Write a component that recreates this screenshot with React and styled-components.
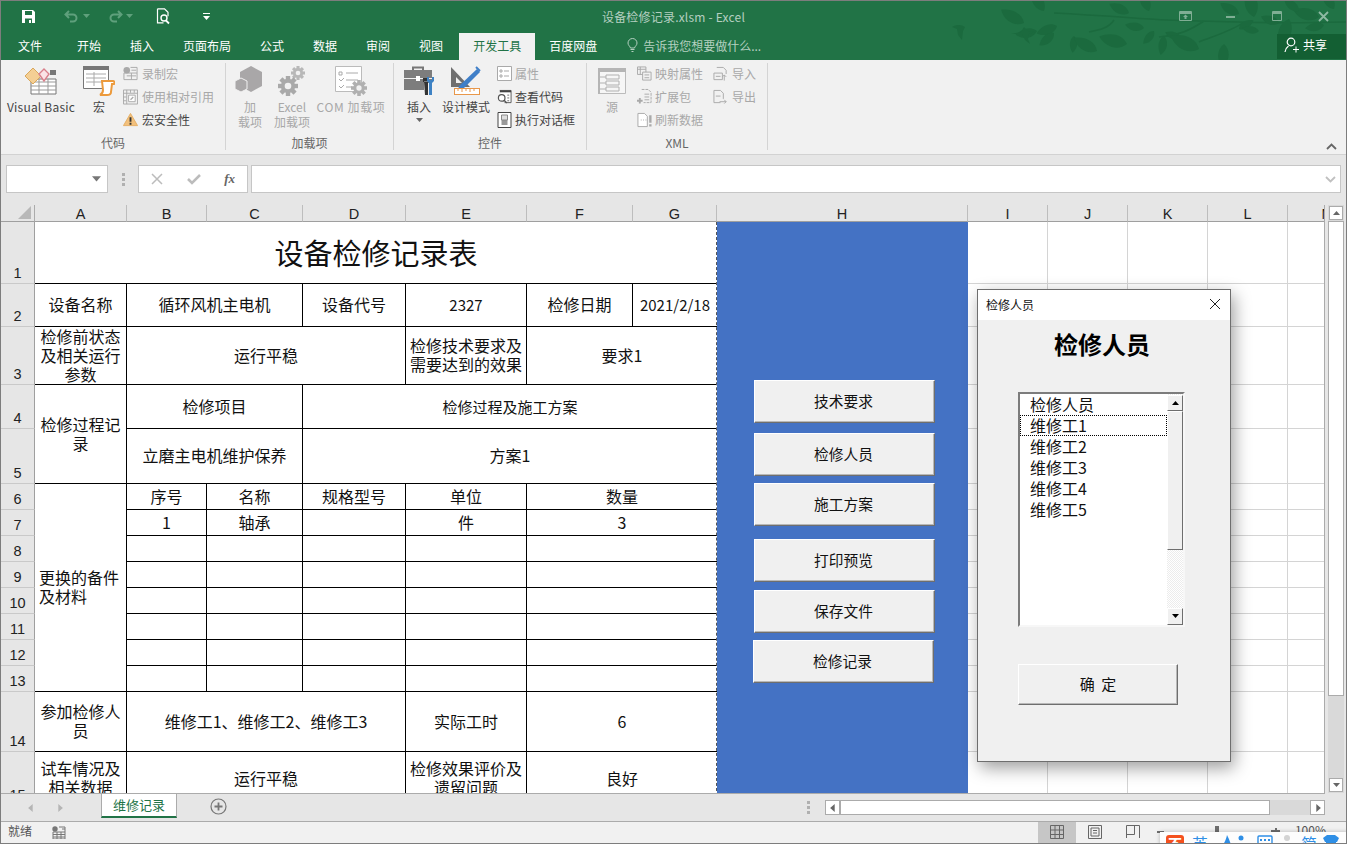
import React from "react";
import styled, { createGlobalStyle, css } from "styled-components";

const Global = createGlobalStyle`
  html, body { margin: 0; padding: 0; background: #fff; }
  body { font-family: "Noto Sans CJK SC", "Liberation Sans", sans-serif; }
  * { box-sizing: border-box; }
`;

const UI = `"Noto Sans CJK SC", "Liberation Sans", sans-serif`;

const Window = styled.div`
  position: relative; width: 1347px; height: 844px; overflow: hidden;
  border: 1px solid #7d7d7d; display: flex; flex-direction: column;
  background: #e6e6e6; font-family: ${UI}; font-size: 12px; color: #444;
`;
const Header = styled.header`
  position: relative; background: #217346; height: 59px; flex: none; overflow: hidden;
`;
const Foliage = styled.svg`
  position: absolute; right: 0; top: 0; pointer-events: none;
`;
const TitleBar = styled.div`
  position: relative; height: 32px; display: grid; grid-template-columns: 1fr auto 1fr; align-items: center; padding-bottom: 2px;
`;
const Quick = styled.div`display: flex; align-items: center; padding-left: 20px; height: 100%;`;
const QuickSlot = styled.span`display: inline-flex; width: ${p => p.$w}px; justify-content: flex-start; align-items: center;`;
const TitleText = styled.div`color: #b4cfc0; font-size: 12px; letter-spacing: .2px;`;
const WinButtons = styled.div`display: flex; justify-content: flex-end; align-items: center; height: 100%;`;
const WinSlot = styled.span`display: inline-flex; justify-content: center; width: 46px;`;
const Tabs = styled.nav`position: relative; height: 27px; display: flex; padding-left: 3px; align-items: stretch;`;
const Tab = styled.div`
  padding: 0 14px 2px; margin-right: ${p => p.$mr ?? 1}px; margin-left: ${p => p.$ml || 0}px; display: flex; align-items: center; font-size: 12px;
  color: ${p => p.$on ? "#217346" : "#fff"}; background: ${p => p.$on ? "#f1f1f1" : "transparent"};
`;
const TellMe = styled.div`display: flex; align-items: center; gap: 5px; color: #b4d0c0; margin-left: 15px; padding-bottom: 2px; font-size: 12px;`;
const Share = styled.div`
  position: absolute; right: 0; top: 1px; width: 69px; height: 25px; background: #135f33; color: #fff;
  display: flex; align-items: center; gap: 3px; padding-left: 7px; font-size: 12px; padding-bottom: 4px;
`;

const Ribbon = styled.section`
  position: relative; height: 95px; flex: none; background: #f1f1f1; border-bottom: 1px solid #d2d2d2; display: flex; padding-top: 3px;
`;
const Group = styled.div`
  width: ${p => p.$w}px; height: 87px; flex: none; border-right: 1px solid #d4d4d4; display: flex; flex-direction: column;
`;
const GroupBody = styled.div`flex: 1; display: flex; align-items: flex-start; min-height: 0;`;
const GroupLabel = styled.div`height: 14px; line-height: 14px; text-align: center; color: #666; font-size: 12px; flex: none;`;
const Large = styled.div`
  width: ${p => p.$w}px; flex: none; display: flex; flex-direction: column; align-items: center; text-align: center; white-space: nowrap;
  color: ${p => p.$off ? "#a8a8a8" : "#444"}; line-height: 15px; font-size: 12px;
`;
const LargeIcon = styled.div`height: 36px; display: flex; align-items: center; justify-content: center;`;
const Spaced = styled.span`letter-spacing: ${p => p.$ls}px;`;
const DropMark = styled.span`display: flex; margin-top: 3px;`;
const SmallCol = styled.div`
  margin-left: ${p => p.$ml || 0}px; margin-top: -1px; width: ${p => p.$w ? p.$w + "px" : "auto"}; display: flex; flex-direction: column;
`;
const Small = styled.div`
  height: 23px; display: flex; align-items: center; gap: ${p => p.$gap || 3}px; white-space: nowrap; font-size: 12px;
  color: ${p => p.$off ? "#a8a8a8" : "#444"};
  & > svg { flex: none; width: 15px; }
`;
const Collapse = styled.svg`position: absolute; right: 9px; bottom: 4px;`;

const FormulaBar = styled.div`
  height: 50px; flex: none; background: #e6e6e6; padding: 10px 5px 12px 5px; display: flex; align-items: stretch;
`;
const NameBox = styled.div`
  width: 102px; background: #fff; border: 1px solid #c6c6c6; display: flex; align-items: center; justify-content: flex-end; padding-right: 6px;
`;
const Grip = styled.div`width: 30px; display: flex; align-items: center; justify-content: center;`;
const FxBox = styled.div`
  width: 110px; background: #fff; border: 1px solid #c6c6c6; display: flex; align-items: center; justify-content: space-between; padding: 0 12px 0 12px;
`;
const FxText = styled.span`font-family: "Liberation Serif", serif; font-style: italic; font-size: 13px; font-weight: 700; color: #666;`;
const FxInput = styled.div`
  flex: 1; margin-left: 3px; background: #fff; border: 1px solid #c6c6c6; display: flex; align-items: center; justify-content: flex-end; padding-right: 4px;
`;

const SheetArea = styled.div`height: 589px; flex: none; display: flex; background: #e6e6e6;`;
const Grid = styled.div`
  width: 1324px; flex: none; overflow: hidden; display: grid; background: #fff; border-right: 1px solid #ababab; border-bottom: 1px solid #ababab;
  grid-template-columns: 34px 92px 80px 96px 103px 121px 106px 84px 251px 80px 80px 80px 80px 80px;
  grid-template-rows: 17px 62px 43px 58px 44px 55px repeat(8, 26px) 60px 54px;
`;
const Corner = styled.div`
  grid-column: 1; grid-row: 1; background: #e6e6e6; border-right: 1px solid #ababab; border-bottom: 1px solid #9f9f9f;
  display: flex; align-items: flex-end; justify-content: flex-end; padding: 0 3px 2px 0;
`;
const ColHead = styled.div`
  grid-column: ${p => p.$c}; grid-row: 1; background: #e6e6e6; color: #222; border-bottom: 1px solid #9f9f9f; border-right: 1px solid #bdbdbd;
  font: 14.5px/18px "Liberation Sans", sans-serif; text-align: center;
`;
const RowHead = styled.div`
  grid-column: 1; grid-row: ${p => p.$r + 1}; background: #e6e6e6; color: #222; border-right: 1px solid #9f9f9f; border-bottom: 1px solid #c9c9c9;
  font: 14.5px/17px "Liberation Sans", sans-serif; display: flex; align-items: flex-end; justify-content: center; padding-bottom: 1px; overflow: hidden;
`;
const Empty = styled.div`
  grid-column: ${p => p.$c}; grid-row: ${p => p.$r + 1}; border-right: 1px solid #d4d4d4; border-bottom: 1px solid #d4d4d4;
`;
const Cell = styled.div`
  grid-column: ${p => p.$c} / span ${p => p.$cs || 1}; grid-row: ${p => p.$r + 1} / span ${p => p.$rs || 1};
  border-bottom: 1px solid #000; border-right: ${p => p.$open ? "0" : "1px solid #000"};
  background: #fff; color: #111; padding: 0 4px 1px; display: flex; align-items: center; min-width: 0; overflow: hidden;
  justify-content: center; font-size: ${p => p.$size || 16}px; line-height: 19px;
  text-align: ${p => p.$left ? "left" : "center"};
  ${p => p.$left && css`justify-content: flex-start;`}
`;
const BlueCol = styled.div`
  grid-column: 9; grid-row: 2 / span 15; margin-left: -1px; background: #4472c4; background-clip: padding-box; border-left: 1px dashed #555;
  display: flex; flex-direction: column; align-items: flex-start; padding: 158px 0 0 37px;
`;
const FormButton = styled.div`
  width: 181px; height: 43px; flex: none; margin-top: ${p => p.$mt || 0}px; margin-left: ${p => p.$ml || 0}px;
  background: #f0f0f0; border: 1px solid; border-color: #fff #6e6e6e #6e6e6e #fff; box-shadow: inset -1px -1px 0 #b8b8b8;
  display: flex; align-items: center; justify-content: center; font-size: 14.7px; color: #111; padding: 0 2px 2px 0;
`;

const VScroll = styled.div`
  width: 16px; margin-left: 3px; flex: none; background: #d9d9d9; display: flex; flex-direction: column; align-items: stretch;
  height: 588px;
`;
const ScrollBtn = styled.div`
  flex: none; width: ${p => p.$w || 15}px; height: ${p => p.$h || 15}px; margin: ${p => p.$m || "0"}; background: #fff; border: 1px solid #ababab;
  display: flex; align-items: center; justify-content: center;
`;
const VThumb = styled.div`height: 475px; flex: none; background: #fff; border: 1px solid #ababab; margin-top: 1px;`;
const VTrack = styled.div`flex: 1;`;

const SheetBar = styled.div`height: 27px; flex: none; background: #e6e6e6; display: flex; align-items: flex-start;`;
const NavArea = styled.div`width: 100px; height: 100%; display: flex; align-items: center; gap: 21px; padding: 0 0 0 26px; flex: none;`;
const SheetTab = styled.div`
  width: 76px; height: 24px; flex: none; background: #fff; border-left: 1px solid #ababab; border-right: 1px solid #ababab; border-bottom: 2px solid #217346;
  color: #217346; text-align: center; line-height: 22px; font-size: 13px;
`;
const AddSheet = styled.div`margin: 4px 0 0 33px; display: flex;`;
const BarSpacer = styled.div`flex: 1;`;
const Dots = styled.div`height: 100%; width: 14px; margin-right: 10px; display: flex; align-items: center; justify-content: center; padding-bottom: 1px;`;
const HScroll = styled.div`
  width: 500px; height: 15px; margin: 6px 21px 0 0; flex: none; background: #d9d9d9; display: flex;
`;
const HThumb = styled.div`width: 430px; height: 15px; background: #fff; border: 1px solid #ababab;`;

const StatusBar = styled.footer`
  flex: 1; background: #f1f1f1; border-top: 1px solid #ababab; display: flex; align-items: flex-start; color: #555; font-size: 12px; position: relative; min-height: 0;
`;
const Ready = styled.div`padding: 1px 0 0 7px; width: 51px; line-height: 16px;`;
const MacroIcon = styled.div`padding-top: 3px;`;
const Views = styled.div`margin-left: auto; display: flex; height: 100%; margin-right: 194px;`;
const ViewBtn = styled.div`
  width: 38px; display: flex; justify-content: center; padding-top: 3px; background: ${p => p.$on ? "#c6c6c6" : "transparent"};
`;
const ZoomText = styled.div`position: absolute; right: 20px; top: -1px; font-size: 12px; color: #555;`;
const ZoomMark = styled.div`
  position: absolute; left: ${p => p.$x}px; top: ${p => p.$t}px; width: ${p => p.$w}px; height: ${p => p.$h}px; background: #6e6e6e;
`;

const Ime = styled.div`
  position: absolute; left: 1159px; top: 831px; width: 188px; height: 14px; background: #fdfdfd; box-shadow: 0 0 4px rgba(0,0,0,.25);
  display: flex; align-items: flex-start; overflow: hidden; padding: 3px 0 0 6px; color: #2f8fe6;
`;
const ImeLogo = styled.div`
  width: 18px; height: 18px; border-radius: 3px; background: #f4511e; color: #fff; text-align: center; font-size: 14px; line-height: 17px; font-weight: 700; flex: none;
`;
const ImeText = styled.span`font-size: 16px; line-height: 16px; margin-left: ${p => p.$ml}px; flex: none;`;
const ImeIcon = styled.span`margin-left: ${p => p.$ml}px; display: inline-flex; flex: none;`;

const Dialog = styled.div`
  position: absolute; left: 976px; top: 288px; width: 254px; height: 473px; background: #f0f0f0; border: 1px solid #6e6e6e;
  box-shadow: 3px 6px 16px rgba(0,0,0,.38); display: flex; flex-direction: column;
`;
const DialogTitle = styled.div`
  height: 30px; flex: none; background: #fff; display: flex; align-items: center; justify-content: space-between; padding: 0 9px 2px 8px; color: #111; font-size: 12px;
`;
const DialogBody = styled.div`flex: 1; padding: 10px 0 0 40px; display: flex; flex-direction: column; align-items: flex-start;`;
const DialogHeading = styled.div`
  width: 167px; height: 30px; text-align: center; font-size: 24px; font-weight: 700; line-height: 28px; color: #000; white-space: nowrap; padding-left: 1px;
`;
const ListBox = styled.div`
  margin-top: 32px; width: 167px; height: 235px; background: #fff; display: flex; border: 2px solid; border-color: #7c7c7c #f7f7f7 #f7f7f7 #7c7c7c;
`;
const ListItems = styled.div`flex: 1; padding-top: 0; min-width: 0;`;
const ListItem = styled.div`
  height: 21px; line-height: 20px; padding-left: 10px; font-size: 16px; color: #111;
  ${p => p.$focus && css`outline: 1px dotted #000; outline-offset: -1px;`}
`;
const ListScroll = styled.div`
  width: 16px; flex: none; display: flex; flex-direction: column;
  background: repeating-conic-gradient(#ececec 0 25%, #fff 0 50%) 0 0 / 2px 2px;
`;
const Bevel = styled.div`
  flex: none; height: ${p => p.$h}px; background: #f0f0f0; border: 1px solid; border-color: #fff #6e6e6e #6e6e6e #fff;
  display: flex; align-items: center; justify-content: center; margin-top: ${p => p.$mt || 0}px;
`;
const ListTrack = styled.div`flex: 1;`;
const OkButton = styled.div`
  margin-top: 37px; width: 160px; height: 41px; background: #f0f0f0; border: 1px solid; border-color: #fff #6e6e6e #6e6e6e #fff;
  box-shadow: inset -1px -1px 0 #b8b8b8; display: flex; align-items: center; justify-content: center; font-size: 15px; color: #111; word-spacing: 3px; padding-bottom: 3px;
`;

/* ---------- icons ---------- */
const G = "#a9a9a9";
const Tri = ({ dir = "down", c = "#666", s = 7 }) => {
  const d = { down: "M0 1h7L3.5 5z", up: "M0 5h7L3.5 1z", left: "M5 0v7L1 3.5z", right: "M2 0v7l4-3.5z" }[dir];
  return <svg width={s} height={s} viewBox="0 0 7 7"><path d={d} fill={c} /></svg>;
};
const SaveIcon = () => (
  <svg width="15" height="15" viewBox="0 0 15 15"><path d="M1 1h11l2 2v11H1z" fill="#fff" /><path d="M4 2h7v4H4zM4 9.5h7V14H4z" fill="#217346" /><path d="M8 11h2v3H8z" fill="#fff" /></svg>
);
const UndoIcon = ({ flip }) => (
  <svg width="15" height="13" viewBox="0 0 15 13" style={flip ? { transform: "scaleX(-1)" } : undefined}><path d="M5 1 1.5 4.5 5 8M2 4.5h7a3.5 3.5 0 0 1 0 7H6" fill="none" stroke="#5fa07c" strokeWidth="2" /></svg>
);
const PreviewIcon = () => (
  <svg width="15" height="17" viewBox="0 0 15 17"><path d="M1.5.8h7l3.5 3.5v4M1.5.8v14h6" fill="none" stroke="#fff" strokeWidth="1.2" /><circle cx="8" cy="10" r="3" fill="none" stroke="#fff" strokeWidth="1.4" /><path d="m10 12.5 3 3" stroke="#fff" strokeWidth="1.8" /></svg>
);
const CustomizeIcon = () => (
  <svg width="9" height="9" viewBox="0 0 9 9"><path d="M1 1h7v1H1z" fill="#fff" /><path d="M1 4h7L4.5 8z" fill="#fff" /></svg>
);
const BranchArt = () => {
  const leaves = [
    [75,22,-150,1.1],[95,10,-120,1],[108,25,160,.9],[88,30,170,.9],[105,32,140,.8],[125,35,95,.7],
    [180,12,-155,.9],[200,10,-110,.9],[195,27,-170,.8],[205,30,130,.7],[290,13,-150,.9],[305,16,-100,1.2],
    [178,43,-165,1.2],[148,50,-150,1.1],[215,35,100,.8],[232,37,-160,.7],[250,48,-155,1.3],[275,43,95,1],[290,28,-30,.7],
    [340,18,110,1.2],[330,22,-160,.8],[310,30,-170,.7],[370,16,-165,1.1],[385,8,-120,.9],[375,24,170,.8],[350,10,-140,.8]
  ];
  const L = "#1b6a3e";
  return (
    <Foliage width="397" height="59" viewBox="0 0 397 59">
      <path d="M105 12c40 2 65 4 95 6s60 2 90 3 60 1 107 0M165 19c-5 8-15 10-25 12M255 20c-15 10-25 14-45 16M295 21c-10 8-30 14-45 20" fill="none" stroke={L} strokeWidth="1.6" />
      {leaves.map(([x, y, r, s], i) => (
        <path key={i} d="M0 0C5-7 16-8 24 0 16 6 6 7 0 0z" fill={L} transform={`translate(${x} ${y}) rotate(${r}) scale(${s})`} />
      ))}
      <path d="M3 26c5-3 10-2 13 0l-2 4-1 9-4-5-1-6zM62 33l10-2 3-5 4 4 7 1-6 2-1 5 2 5-5-4-3-6z" fill={L} />
    </Foliage>
  );
};
const RibbonDisplayIcon = () => (
  <svg width="13" height="10" viewBox="0 0 13 10"><path d="M.5.5h12v9H.5z" fill="none" stroke="#7fae94" /><path d="M1 1h11v2H1zM6.5 3.5 4 6h1.5v2h2V6H9z" fill="#7fae94" /></svg>
);
const MinIcon = () => <svg width="10" height="10" viewBox="0 0 10 10"><path d="M0 5h9v2H0z" fill="#7fae94" /></svg>;
const MaxIcon = () => <svg width="11" height="11" viewBox="0 0 11 11"><path d="M.5.5h9v9h-9z" fill="none" stroke="#7fae94" /><path d="M1 1h8v2H1z" fill="#7fae94" /></svg>;
const CloseIcon = () => <svg width="11" height="11" viewBox="0 0 11 11"><path d="m1 1 9 9M10 1l-9 9" stroke="#8fb9a3" strokeWidth="1.8" /></svg>;
const BulbIcon = () => (
  <svg width="11" height="15" viewBox="0 0 11 15"><path d="M3.5 10C3 8 1 7.5 1 5a4.5 4.5 0 0 1 9 0c0 2.500-2 3-2.500 5z" fill="none" stroke="#b4d0c0" /><path d="M3.500 11.500h4M4.500 13.500h2" stroke="#b4d0c0" /></svg>
);
const ShareIcon = () => (
  <svg width="16" height="16" viewBox="0 0 16 16"><circle cx="7" cy="5" r="3.8" fill="none" stroke="#fff" strokeWidth="1.2" /><path d="M1 15c.5-3 2-5 3.500-6" fill="none" stroke="#fff" strokeWidth="1.2" /><path d="M9 12.500h6M12 9.500v6" stroke="#fff" /></svg>
);

const VbIcon = () => (
  <svg width="32" height="28" viewBox="0 0 32 28">
    <path d="M6 12h25v15H6z" fill="#fff" stroke="#777" />
    <path d="M6 15h25M6 19h25M6 23h25M14 12v15M23 12v15" stroke="#999" />
    <path d="M25 3h6v5h-6z" fill="#777" />
    <path d="M0 9 8 1l8 8-8 8z" fill="#f4cf94" stroke="#d9a75c" />
    <path d="M14 7l5-5 5 5-5 7z" fill="#fbe3e6" stroke="#d9808c" strokeWidth="1.4" />
  </svg>
);
const MacroBigIcon = () => (
  <svg width="32" height="30" viewBox="0 0 32 30">
    <path d="M.5.500h25v22H.5z" fill="#fff" stroke="#777" />
    <path d="M0 0h26v4H0z" fill="#777" />
    <path d="M3 8h20M3 12h20M3 16h20M11 6v14" stroke="#aaa" />
    <path d="M19 15h11c1 0 2 1 1 3l-2 0-1 8c0 2-2 3-4 3h-7c2-1 3-3 3-5z" fill="#fff" stroke="#ec9a3c" strokeWidth="2" />
  </svg>
);
const RecordIcon = () => (
  <svg width="16" height="15" viewBox="0 0 16 15"><circle cx="4" cy="4" r="3.500" fill={G} /><path d="M1 7h14v7H1zM8 1h7v6" fill="none" stroke={G} /><path d="M4 10h10M9 4h5M9 7v7" stroke={G} /></svg>
);
const RelativeIcon = () => (
  <svg width="16" height="16" viewBox="0 0 16 16"><path d="M.5.500h15v15H.5zM.5 4h15M4 .5v15M8 .5v3M12 .5v3M.5 8h3M.5 12h3" fill="none" stroke={G} /><path d="M6 6h7v7H6z" fill="#fff" stroke={G} /><path d="M11 8 8 11" stroke={G} strokeWidth="1.400" /></svg>
);
const WarnIcon = () => (
  <svg width="16" height="15" viewBox="0 0 16 15"><path d="M8 1 15.500 14H.5z" fill="#f2c07c" stroke="#e5ae63" /><path d="M7 5h2v5H7zM7 11h2v2H7z" fill="#333" /></svg>
);
const HexIcon = () => (
  <svg width="30" height="30" viewBox="0 0 30 30"><path d="m16 0 11 6v14l-11 6-11-6V6z" fill="#a9a7a8" /><path d="m6 12 6 3v8l-6 3-6-3v-8z" fill="#a9a7a8" stroke="#f1f1f1" /></svg>
);
const Gear = ({ x, y, r, c = G }) => (
  <g transform={`translate(${x} ${y})`} fill={c}>
    {[0, 45, 90, 135].map(a => <rect key={a} x={-r * .22} y={-r} width={r * .44} height={r * 2} transform={`rotate(${a})`} />)}
    <circle r={r * .72} /><circle r={r * .33} fill="#f1f1f1" />
  </g>
);
const GearsIcon = () => <svg width="28" height="30" viewBox="0 0 28 30"><Gear x={20} y={7} r={7} c="#b8b8b8" /><Gear x={10} y={20} r={10} /></svg>;
const ComIcon = () => (
  <svg width="32" height="31" viewBox="0 0 32 31">
    <path d="M.5.500h26v25H.5z" fill="#fff" stroke="#bbb" />
    <path d="M4 6h3v3H4zM4 13l2 2 3-3M4 20l2 2 3-3" fill="none" stroke="#aaa" /><path d="M11 7h12M11 14h12M11 21h6" stroke="#aaa" />
    <Gear x={24} y={22} r={8} c="#b0b0b0" />
  </svg>
);
const ToolboxIcon = () => (
  <svg width="30" height="30" viewBox="0 0 30 30">
    <path d="M9 4V1.500h10V4" fill="none" stroke="#777" strokeWidth="2" />
    <path d="M0 4h28v8H0zM0 13h20v11H0z" fill="#7d7d7d" /><path d="M20 13h8v4h-8z" fill="#7d7d7d" />
    <path d="M12 10h4v5h-4z" fill="#fff" />
    <path d="M20 15h4v14h-3zM19 12v4h6v-4" fill="#333" />
    <path d="M25 15h3v14h-3z" fill="#3e82c4" /><path d="M23 11v4l2 2h3l2-2v-4h-2v3h-3v-3z" fill="#3e82c4" />
  </svg>
);
const DesignIcon = () => (
  <svg width="32" height="30" viewBox="0 0 32 30">
    <path d="M1 1v20h19z" fill="#6f6f6f" /><path d="M6 11v6h6z" fill="#f1f1f1" />
    <path d="M9 20 27 3l3 3-17 17-5 1z" fill="#3f7fc8" /><path d="m26 1 4 4" stroke="#3f7fc8" strokeWidth="2" />
    <rect x="4.500" y="22.500" width="25" height="6" fill="#fff" stroke="#e8974a" /><path d="M8 23v2M12 23v3M16 23v2M20 23v3M24 23v2" stroke="#e8974a" />
  </svg>
);
const PropsIcon = () => (
  <svg width="15" height="15" viewBox="0 0 15 15"><path d="M.5.5h14v14H.5z" fill="#fff" stroke={G} /><path d="M3 4h2v2H3zM3 9h2v2H3z" fill="none" stroke={G} /><path d="M7 5h5M7 10h5" stroke={G} /></svg>
);
const ViewCodeIcon = () => (
  <svg width="16" height="16" viewBox="0 0 16 16"><path d="M3 1h12v13H8" fill="#fff" stroke="#555" /><path d="M3 1h12v2H3z" fill="#444" /><path d="M11 6h2M11 9h2M11 12h2" stroke="#666" /><circle cx="5" cy="9" r="3.500" fill="#fff" stroke="#555" strokeWidth="1.300" /><path d="m7.500 11.500 3 3" stroke="#555" strokeWidth="1.500" /></svg>
);
const DialogIcon = () => (
  <svg width="14" height="16" viewBox="0 0 14 16"><path d="M.5.5h13v15H.5z" fill="#fff" stroke="#444" /><path d="M4 3h6v10H4z" fill="#999" /><path d="M4 3h6v5H4z" fill="#ddd" stroke="#888" /></svg>
);
const SourceIcon = () => (
  <svg width="28" height="26" viewBox="0 0 28 26">
    <path d="M.5.500h27v25H.5z" fill="#f6f6f6" stroke="#bbb" /><path d="M0 0h28v4H0zM0 0h2v26H0z" fill="#b5b5b5" />
    <path d="M8 7h13v4H8zM8 13h13v4H8zM8 19h13v4H8zM2 9h6M2 15h6M2 21h6" fill="none" stroke="#b0b0b0" />
  </svg>
);
const MapIcon = () => (
  <svg width="16" height="15" viewBox="0 0 16 15"><path d="M.5.5h9v8h-9zM.5 3h9M3.500.5v8" fill="none" stroke={G} /><path d="M6 6h9v8.500H6z" fill="#f1f1f1" stroke={G} /><path d="M8 9h5M8 12h5" stroke={G} /></svg>
);
const PackIcon = () => (
  <svg width="16" height="17" viewBox="0 0 16 17"><path d="M5 1h7l3 3v11H7" fill="none" stroke={G} strokeDasharray="3 1" /><path d="M8 6h5M8 9h5M8 12h5" stroke={G} /><path d="M0 13h6M3 10v6" stroke={G} strokeWidth="2" /></svg>
);
const RefreshIcon = () => (
  <svg width="16" height="16" viewBox="0 0 16 16"><path d="M1 1h7l3 3v11H1z" fill="#fff" stroke={G} /><path d="M4 8h1M6.500 8h1M9 8h1" stroke={G} /><path d="M13 3h2.500v8H13zM13 12.500h2.500V15H13z" fill={G} /></svg>
);
const ImportIcon = ({ out }) => (
  <svg width="16" height="16" viewBox="0 0 16 16"><path d={out ? "M1 1h7l3 3v6" : "M4 1h7l3 3v4"} fill="none" stroke={G} /><path d={out ? "M1 1v13h7" : "M1 7h9v7H1z"} fill="#f1f1f1" stroke={G} /><path d={out ? "M3 7h5M7 13h7l-2-2M14 13l-2 2" : "M3 10.500h5M12 15V9l-2 2M12 9l2 2"} fill="none" stroke={G} /></svg>
);
const XIcon = () => <svg width="12" height="12" viewBox="0 0 12 12"><path d="m1 1 10 10M11 1 1 11" stroke="#bcbcbc" strokeWidth="1.500" /></svg>;
const CheckIcon = () => <svg width="14" height="12" viewBox="0 0 14 12"><path d="m1 6 4 4 8-8" fill="none" stroke="#bcbcbc" strokeWidth="2.500" /></svg>;
const DotsIcon = () => <svg width="3" height="13" viewBox="0 0 3 13"><path d="M0 0h3v3H0zM0 5h3v3H0zM0 10h3v3H0z" fill="#b0b0b0" /></svg>;
const PlusCircle = () => (
  <svg width="17" height="17" viewBox="0 0 17 17"><circle cx="8.500" cy="8.500" r="7.500" fill="none" stroke="#777" strokeWidth="1.200" /><path d="M4.500 8.500h8M8.500 4.500v8" stroke="#777" strokeWidth="1.800" /></svg>
);
const StatusMacro = () => (
  <svg width="14" height="13" viewBox="0 0 14 13"><circle cx="3" cy="3" r="2.700" fill="#777" /><path d="M1 6h12v7H1zM7 1h6v5" fill="none" stroke="#777" /><path d="M1 8.500h12M1 11h12M5 6v7M9 6v7M10 3h3" stroke="#777" /></svg>
);
const NormalView = () => <svg width="14" height="14" viewBox="0 0 14 14"><path d="M.5.500h13v13H.5zM.5 5h13M.5 9.500h13M5 .5v13M9.500.5v13" fill="none" stroke="#666" /></svg>;
const LayoutView = () => <svg width="14" height="14" viewBox="0 0 14 14"><path d="M.5.500h13v13H.5z" fill="none" stroke="#666" /><path d="M3 3h8v8H3zM5 5.500h4M5 8h4" fill="none" stroke="#666" /></svg>;
const BreakView = () => <svg width="14" height="14" viewBox="0 0 14 14"><path d="M.5 13V.5h13V13M.5 9.500h8V.5" fill="none" stroke="#666" /></svg>;
const DialogClose = () => <svg width="12" height="12" viewBox="0 0 12 12"><path d="m1 1 10 10M11 1 1 11" stroke="#222" /></svg>;
const CornerTri = () => <svg width="13" height="13" viewBox="0 0 13 13"><path d="M13 0v13H0z" fill="#b8b8b8" /></svg>;
const FormulaChevron = () => <svg width="11" height="7" viewBox="0 0 11 7"><path d="m1 1 4.500 4.500L10 1" fill="none" stroke="#c0c0c0" strokeWidth="1.800" /></svg>;

/* ---------- data ---------- */
const TABS = ["开始", "插入", "页面布局", "公式", "数据", "审阅", "视图"];
const COLS = ["A", "B", "C", "D", "E", "F", "G", "H", "I", "J", "K", "L", "M"];
const ROW_NUMS = Array.from({ length: 15 }, (_, i) => i + 1);
const BUTTONS = [
  ["技术要求", 0, 0], ["检修人员", 10, 0], ["施工方案", 7, 0], ["打印预览", 13, 0], ["保存文件", 8, 0], ["检修记录", 7, -1],
];
const PEOPLE = ["检修人员", "维修工1", "维修工2", "维修工3", "维修工4", "维修工5"];
const PARTS = [[6, "序号", "名称", "规格型号", "单位", "数量"], [7, "1", "轴承", "", "件", "3"], ...[8, 9, 10, 11, 12, 13].map(r => [r, "", "", "", "", ""])];

export default function App() {
  return (
    <>
      <Global />
      <Window>
        <Header>
          <BranchArt />
          <TitleBar>
            <Quick>
              <QuickSlot $w={43}><SaveIcon /></QuickSlot>
              <QuickSlot $w={19}><UndoIcon /></QuickSlot>
              <QuickSlot $w={25}><Tri c="#5fa07c" /></QuickSlot>
              <QuickSlot $w={18}><UndoIcon flip /></QuickSlot>
              <QuickSlot $w={30}><Tri c="#5fa07c" /></QuickSlot>
              <QuickSlot $w={46}><PreviewIcon /></QuickSlot>
              <QuickSlot $w={10}><CustomizeIcon /></QuickSlot>
            </Quick>
            <TitleText>设备检修记录.xlsm - Excel</TitleText>
            <WinButtons>
              <WinSlot><RibbonDisplayIcon /></WinSlot>
              <WinSlot><MinIcon /></WinSlot>
              <WinSlot><MaxIcon /></WinSlot>
              <WinSlot><CloseIcon /></WinSlot>
            </WinButtons>
          </TitleBar>
          <Tabs>
            <Tab $mr={7}>文件</Tab>
            {TABS.map(t => <Tab key={t}>{t}</Tab>)}
            <Tab $on $ml={1} $mr={0}>开发工具</Tab>
            <Tab>百度网盘</Tab>
            <TellMe><BulbIcon />告诉我您想要做什么...</TellMe>
            <Share><ShareIcon />共享</Share>
          </Tabs>
        </Header>

        <Ribbon>
          <Group $w={225}>
            <GroupBody>
              <Large $w={80}><LargeIcon><VbIcon /></LargeIcon><Spaced $ls={0.2}>Visual Basic</Spaced></Large>
              <Large $w={36}><LargeIcon><MacroBigIcon /></LargeIcon>宏</Large>
              <SmallCol $ml={6}>
                <Small $off $gap={4}><RecordIcon />录制宏</Small>
                <Small $off $gap={4}><RelativeIcon />使用相对引用</Small>
                <Small $gap={4}><WarnIcon />宏安全性</Small>
              </SmallCol>
            </GroupBody>
            <GroupLabel>代码</GroupLabel>
          </Group>
          <Group $w={168}>
            <GroupBody>
              <Large $w={48} $off><LargeIcon><HexIcon /></LargeIcon>加<br />载项</Large>
              <Large $w={36} $off><LargeIcon><GearsIcon /></LargeIcon>Excel<br />加载项</Large>
              <Large $w={82} $off><LargeIcon><ComIcon /></LargeIcon><Spaced $ls={0.6}>COM 加载项</Spaced></Large>
            </GroupBody>
            <GroupLabel>加载项</GroupLabel>
          </Group>
          <Group $w={193}>
            <GroupBody>
              <Large $w={50}><LargeIcon><ToolboxIcon /></LargeIcon>插入<DropMark><Tri /></DropMark></Large>
              <Large $w={44}><LargeIcon><DesignIcon /></LargeIcon>设计模式</Large>
              <SmallCol $ml={9}>
                <Small $off><PropsIcon />属性</Small>
                <Small><ViewCodeIcon />查看代码</Small>
                <Small><DialogIcon />执行对话框</Small>
              </SmallCol>
            </GroupBody>
            <GroupLabel>控件</GroupLabel>
          </Group>
          <Group $w={181}>
            <GroupBody>
              <Large $w={50} $off><LargeIcon><SourceIcon /></LargeIcon>源</Large>
              <SmallCol $w={76}>
                <Small $off><MapIcon />映射属性</Small>
                <Small $off><PackIcon />扩展包</Small>
                <Small $off><RefreshIcon />刷新数据</Small>
              </SmallCol>
              <SmallCol>
                <Small $off $gap={4}><ImportIcon />导入</Small>
                <Small $off $gap={4}><ImportIcon out />导出</Small>
              </SmallCol>
            </GroupBody>
            <GroupLabel>XML</GroupLabel>
          </Group>
          <Collapse width="11" height="7" viewBox="0 0 11 7"><path d="m1 6 4.500-4.500L10 6" fill="none" stroke="#666" strokeWidth="1.800" /></Collapse>
        </Ribbon>

        <FormulaBar>
          <NameBox><Tri c="#777" s={9} /></NameBox>
          <Grip><DotsIcon /></Grip>
          <FxBox><XIcon /><CheckIcon /><FxText>fx</FxText></FxBox>
          <FxInput><FormulaChevron /></FxInput>
        </FormulaBar>

        <SheetArea>
          <Grid>
            <Corner><CornerTri /></Corner>
            {COLS.map((c, i) => <ColHead key={c} $c={i + 2}>{c}</ColHead>)}
            {ROW_NUMS.map(r => <RowHead key={r} $r={r}>{r}</RowHead>)}

            <Cell $c={2} $cs={7} $r={1} $open $size={29}>设备检修记录表</Cell>

            <Cell $c={2} $r={2}>设备名称</Cell>
            <Cell $c={3} $cs={2} $r={2}>循环风机主电机</Cell>
            <Cell $c={5} $r={2}>设备代号</Cell>
            <Cell $c={6} $r={2} $size={15}>2327</Cell>
            <Cell $c={7} $r={2}>检修日期</Cell>
            <Cell $c={8} $r={2} $open $size={15}>2021/2/18</Cell>

            <Cell $c={2} $r={3}>检修前状态及相关运行参数</Cell>
            <Cell $c={3} $cs={3} $r={3}>运行平稳</Cell>
            <Cell $c={6} $r={3}>检修技术要求及需要达到的效果</Cell>
            <Cell $c={7} $cs={2} $r={3} $open>要求1</Cell>

            <Cell $c={2} $r={4} $rs={2}>检修过程记录</Cell>
            <Cell $c={3} $cs={2} $r={4}>检修项目</Cell>
            <Cell $c={5} $cs={4} $r={4} $open $size={15}>检修过程及施工方案</Cell>
            <Cell $c={3} $cs={2} $r={5}>立磨主电机维护保养</Cell>
            <Cell $c={5} $cs={4} $r={5} $open>方案1</Cell>

            <Cell $c={2} $r={6} $rs={8} $left>更换的备件及材料</Cell>
            {PARTS.map(([r, a, b, c, d, e]) => (
              <React.Fragment key={r}>
                <Cell $c={3} $r={r}>{a}</Cell>
                <Cell $c={4} $r={r}>{b}</Cell>
                <Cell $c={5} $r={r}>{c}</Cell>
                <Cell $c={6} $r={r}>{d}</Cell>
                <Cell $c={7} $cs={2} $r={r} $open>{e}</Cell>
              </React.Fragment>
            ))}

            <Cell $c={2} $r={14}>参加检修人员</Cell>
            <Cell $c={3} $cs={3} $r={14}>维修工1、维修工2、维修工3</Cell>
            <Cell $c={6} $r={14}>实际工时</Cell>
            <Cell $c={7} $cs={2} $r={14} $open>6</Cell>

            <Cell $c={2} $r={15}>试车情况及相关数据</Cell>
            <Cell $c={3} $cs={3} $r={15}>运行平稳</Cell>
            <Cell $c={6} $r={15}>检修效果评价及遗留问题</Cell>
            <Cell $c={7} $cs={2} $r={15} $open>良好</Cell>

            <BlueCol>
              {BUTTONS.map(([t, mt, ml]) => <FormButton key={t} $mt={mt} $ml={ml}>{t}</FormButton>)}
            </BlueCol>

            {ROW_NUMS.flatMap(r => [10, 11, 12, 13, 14].map(c => <Empty key={`${r}-${c}`} $c={c} $r={r} />))}
          </Grid>
          <VScroll>
            <ScrollBtn $w={14} $h={14} $m="1px 0 0 1px"><Tri dir="up" /></ScrollBtn>
            <VThumb />
            <VTrack />
            <ScrollBtn $w={14} $h={14} $m="0 0 1px 1px"><Tri /></ScrollBtn>
          </VScroll>
        </SheetArea>

        <SheetBar>
          <NavArea><Tri dir="left" c="#b5b5b5" s={8} /><Tri dir="right" c="#b5b5b5" s={8} /></NavArea>
          <SheetTab>维修记录</SheetTab>
          <AddSheet><PlusCircle /></AddSheet>
          <BarSpacer />
          <Dots><DotsIcon /></Dots>
          <HScroll>
            <ScrollBtn $w={15} $h={15}><Tri dir="left" c="#666" s={8} /></ScrollBtn>
            <HThumb />
            <VTrack />
            <ScrollBtn $w={15} $h={15}><Tri dir="right" c="#666" s={8} /></ScrollBtn>
          </HScroll>
        </SheetBar>

        <StatusBar>
          <Ready>就绪</Ready>
          <MacroIcon><StatusMacro /></MacroIcon>
          <Views>
            <ViewBtn $on><NormalView /></ViewBtn>
            <ViewBtn><LayoutView /></ViewBtn>
            <ViewBtn><BreakView /></ViewBtn>
          </Views>
          <ZoomMark $x={1156} $t={9} $w={7} $h={2} />
          <ZoomMark $x={1214} $t={4} $w={4} $h={8} />
          <ZoomMark $x={1270} $t={8} $w={9} $h={2} />
          <ZoomMark $x={1274} $t={6} $w={2} $h={6} />
          <ZoomText>100%</ZoomText>
        </StatusBar>

        <Dialog>
          <DialogTitle>检修人员<DialogClose /></DialogTitle>
          <DialogBody>
            <DialogHeading>检修人员</DialogHeading>
            <ListBox>
              <ListItems>
                {PEOPLE.map((p, i) => <ListItem key={p} $focus={i === 1}>{p}</ListItem>)}
              </ListItems>
              <ListScroll>
                <Bevel $h={16} $mt={1}><Tri dir="up" c="#000" /></Bevel>
                <Bevel $h={139} />
                <ListTrack />
                <Bevel $h={17}><Tri c="#000" /></Bevel>
              </ListScroll>
            </ListBox>
            <OkButton>确 定</OkButton>
          </DialogBody>
        </Dialog>

        <Ime>
          <ImeLogo>不</ImeLogo>
          <ImeText $ml={8}>英</ImeText>
          <ImeIcon $ml={12}><svg width="12" height="14" viewBox="0 0 12 14"><path d="M7 0c2 4 4 8 4 12H1C4 9 6 5 7 0z" fill="#2f8fe6" /></svg></ImeIcon>
          <ImeIcon $ml={5}><svg width="14" height="14" viewBox="0 0 14 14"><circle cx="4" cy="3" r="2.500" fill="#2f8fe6" /><path d="M1 8h4v6H1zM9 11h3v3H9z" fill="#2f8fe6" /></svg></ImeIcon>
          <ImeIcon $ml={6}><svg width="16" height="14" viewBox="0 0 16 14"><rect x="1" y="1" width="14" height="12" rx="1" fill="none" stroke="#2f8fe6" strokeWidth="1.400" /><path d="M3 4h2v2H3zM7 4h2v2H7zM11 4h2v2h-2z" fill="#2f8fe6" /></svg></ImeIcon>
          <ImeIcon $ml={11}><svg width="6" height="6" viewBox="0 0 6 6"><circle cx="3" cy="3" r="3" fill="#d4d4d4" /></svg></ImeIcon>
          <ImeText $ml={11}>简</ImeText>
          <ImeIcon $ml={6}><svg width="16" height="14" viewBox="0 0 16 14"><path d="M0 3 4 0h8l4 3-2 4h-1v7H3V7H2z" fill="#2f8fe6" /></svg></ImeIcon>
        </Ime>
      </Window>
    </>
  );
}
